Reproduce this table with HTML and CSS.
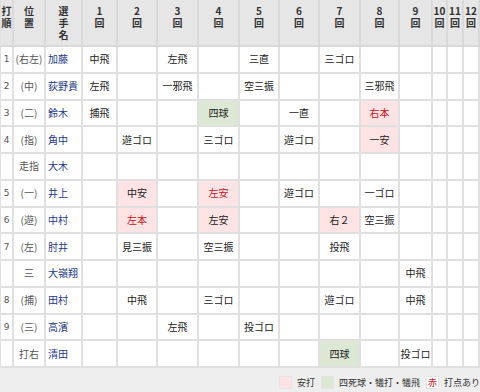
FILE: index.html
```html
<!DOCTYPE html>
<html lang="ja">
<head>
<meta charset="utf-8">
<link rel="stylesheet" href="styles.css">
</head>
<body>
<div class="page">
<table class="score">
<colgroup>
<col class="c-order"><col class="c-pos"><col class="c-name">
<col class="c-i1"><col class="c-i2"><col class="c-i3"><col class="c-i4"><col class="c-i5">
<col class="c-i6"><col class="c-i7"><col class="c-i8"><col class="c-i9">
<col class="c-i10"><col class="c-i11"><col class="c-i12">
</colgroup>
<thead>
<tr>
<th>打<br>順</th><th>位<br>置</th><th>選<br>手<br>名</th>
<th>1<br>回</th><th>2<br>回</th><th>3<br>回</th><th>4<br>回</th><th>5<br>回</th>
<th>6<br>回</th><th>7<br>回</th><th>8<br>回</th><th>9<br>回</th>
<th>10<br>回</th><th>11<br>回</th><th>12<br>回</th>
</tr>
</thead>
<tbody>
<tr><td class="num">1</td><td class="pos">(右左)</td><td class="name">加藤</td>
<td>中飛</td><td></td><td>左飛</td><td></td><td>三直</td><td></td><td>三ゴロ</td><td></td><td></td><td></td><td></td><td></td></tr>
<tr><td class="num">2</td><td class="pos">(中)</td><td class="name">荻野貴</td>
<td>左飛</td><td></td><td>一邪飛</td><td></td><td>空三振</td><td></td><td></td><td>三邪飛</td><td></td><td></td><td></td><td></td></tr>
<tr><td class="num">3</td><td class="pos">(二)</td><td class="name">鈴木</td>
<td>捕飛</td><td></td><td></td><td class="walk">四球</td><td></td><td>一直</td><td></td><td class="hit rbi">右本</td><td></td><td></td><td></td><td></td></tr>
<tr><td class="num">4</td><td class="pos">(指)</td><td class="name">角中</td>
<td></td><td>遊ゴロ</td><td></td><td>三ゴロ</td><td></td><td>遊ゴロ</td><td></td><td class="hit">一安</td><td></td><td></td><td></td><td></td></tr>
<tr><td class="num"></td><td class="pos">走指</td><td class="name">大木</td>
<td></td><td></td><td></td><td></td><td></td><td></td><td></td><td></td><td></td><td></td><td></td><td></td></tr>
<tr><td class="num">5</td><td class="pos">(一)</td><td class="name">井上</td>
<td></td><td class="hit">中安</td><td></td><td class="hit rbi">左安</td><td></td><td>遊ゴロ</td><td></td><td>一ゴロ</td><td></td><td></td><td></td><td></td></tr>
<tr><td class="num">6</td><td class="pos">(遊)</td><td class="name">中村</td>
<td></td><td class="hit rbi">左本</td><td></td><td class="hit">左安</td><td></td><td></td><td class="hit">右２</td><td>空三振</td><td></td><td></td><td></td><td></td></tr>
<tr><td class="num">7</td><td class="pos">(左)</td><td class="name">肘井</td>
<td></td><td>見三振</td><td></td><td>空三振</td><td></td><td></td><td>投飛</td><td></td><td></td><td></td><td></td><td></td></tr>
<tr><td class="num"></td><td class="pos">三</td><td class="name">大嶺翔</td>
<td></td><td></td><td></td><td></td><td></td><td></td><td></td><td></td><td>中飛</td><td></td><td></td><td></td></tr>
<tr><td class="num">8</td><td class="pos">(捕)</td><td class="name">田村</td>
<td></td><td>中飛</td><td></td><td>三ゴロ</td><td></td><td></td><td>遊ゴロ</td><td></td><td>中飛</td><td></td><td></td><td></td></tr>
<tr><td class="num">9</td><td class="pos">(三)</td><td class="name">高濱</td>
<td></td><td></td><td>左飛</td><td></td><td>投ゴロ</td><td></td><td></td><td></td><td></td><td></td><td></td><td></td></tr>
<tr><td class="num"></td><td class="pos">打右</td><td class="name">清田</td>
<td></td><td></td><td></td><td></td><td></td><td></td><td class="walk">四球</td><td></td><td>投ゴロ</td><td></td><td></td><td></td></tr>
</tbody>
</table>
<div class="legend">
<span class="item"><span class="swatch sw-hit"></span>安打</span>
<span class="item"><span class="swatch sw-walk"></span>四死球・犠打・犠飛</span>
<span class="item"><span class="swatch sw-rbi">赤</span>打点あり</span>
</div>
</div>
</body>
</html>
```
FILE: styles.css
```css
html, body {
  margin: 0;
  padding: 0;
  background: #ffffff;
}
body {
  font-family: "Noto Sans CJK JP", "Noto Sans", sans-serif;
  font-size: 10px;
  color: #222;
  width: 480px;
  height: 392px;
  overflow: hidden;
}
.page {
  width: 480px;
  background: #eeeeee;
  height: 392px;
}
.score {
  border-collapse: separate;
  border-spacing: 0;
  table-layout: fixed;
  width: 480px;
  background: #fff;
}
.c-order { width: 14px; }
.c-pos { width: 32px; }
.c-name { width: 37px; }
.c-i1 { width: 35px; }
.c-i2 { width: 40px; }
.c-i3 { width: 41px; }
.c-i4 { width: 41px; }
.c-i5 { width: 40px; }
.c-i6 { width: 40px; }
.c-i7 { width: 41px; }
.c-i8 { width: 39px; }
.c-i9 { width: 33px; }
.c-i10 { width: 15px; }
.c-i11 { width: 16px; }
.c-i12 { width: 16px; }

.score th, .score td {
  box-sizing: border-box;
  border-right: 2px solid #e0e0e0;
  border-bottom: 2px solid #e0e0e0;
  padding: 0;
  overflow: hidden;
  white-space: nowrap;
}
.score th:first-child, .score td:first-child {
  border-left: 1px solid #e0e0e0;
}
.score th {
  background: #e6e6e6;
  border-color: #d9d9d9;
  height: 47px;
  vertical-align: top;
  padding-top: 5px;
  line-height: 12px;
  font-weight: bold;
  color: #333;
  text-align: center;
}
.score td {
  height: 26.75px;
  text-align: center;
  vertical-align: middle;
  line-height: 12px;
  color: #222;
}
.score td.num {
  color: #555;
  font-family: "DejaVu Sans", sans-serif;
  font-size: 9px;
}
.score td.pos {
  color: #555;
}
.score td.name {
  text-align: left;
  padding-left: 2px;
  color: #22388a;
}
.score td.hit {
  background: #fde3e3;
}
.score td.walk {
  background: #dce8d4;
}
.score td.rbi {
  color: #d0101a;
}
.legend {
  display: flex;
  justify-content: flex-end;
  align-items: center;
  gap: 6px;
  padding-top: 8px;
  font-size: 9px;
  color: #333;
}
.item {
  display: flex;
  align-items: center;
  gap: 5px;
}
.swatch {
  display: inline-block;
  box-sizing: border-box;
  width: 13px;
  height: 13px;
  border: 1px solid #e4e4e4;
}
.sw-hit { background: #fde3e3; }
.sw-walk { background: #dce8d4; }
.sw-rbi {
  background: #fff;
  color: #d0101a;
  text-align: center;
  line-height: 11px;
  font-size: 9px;
}
```
